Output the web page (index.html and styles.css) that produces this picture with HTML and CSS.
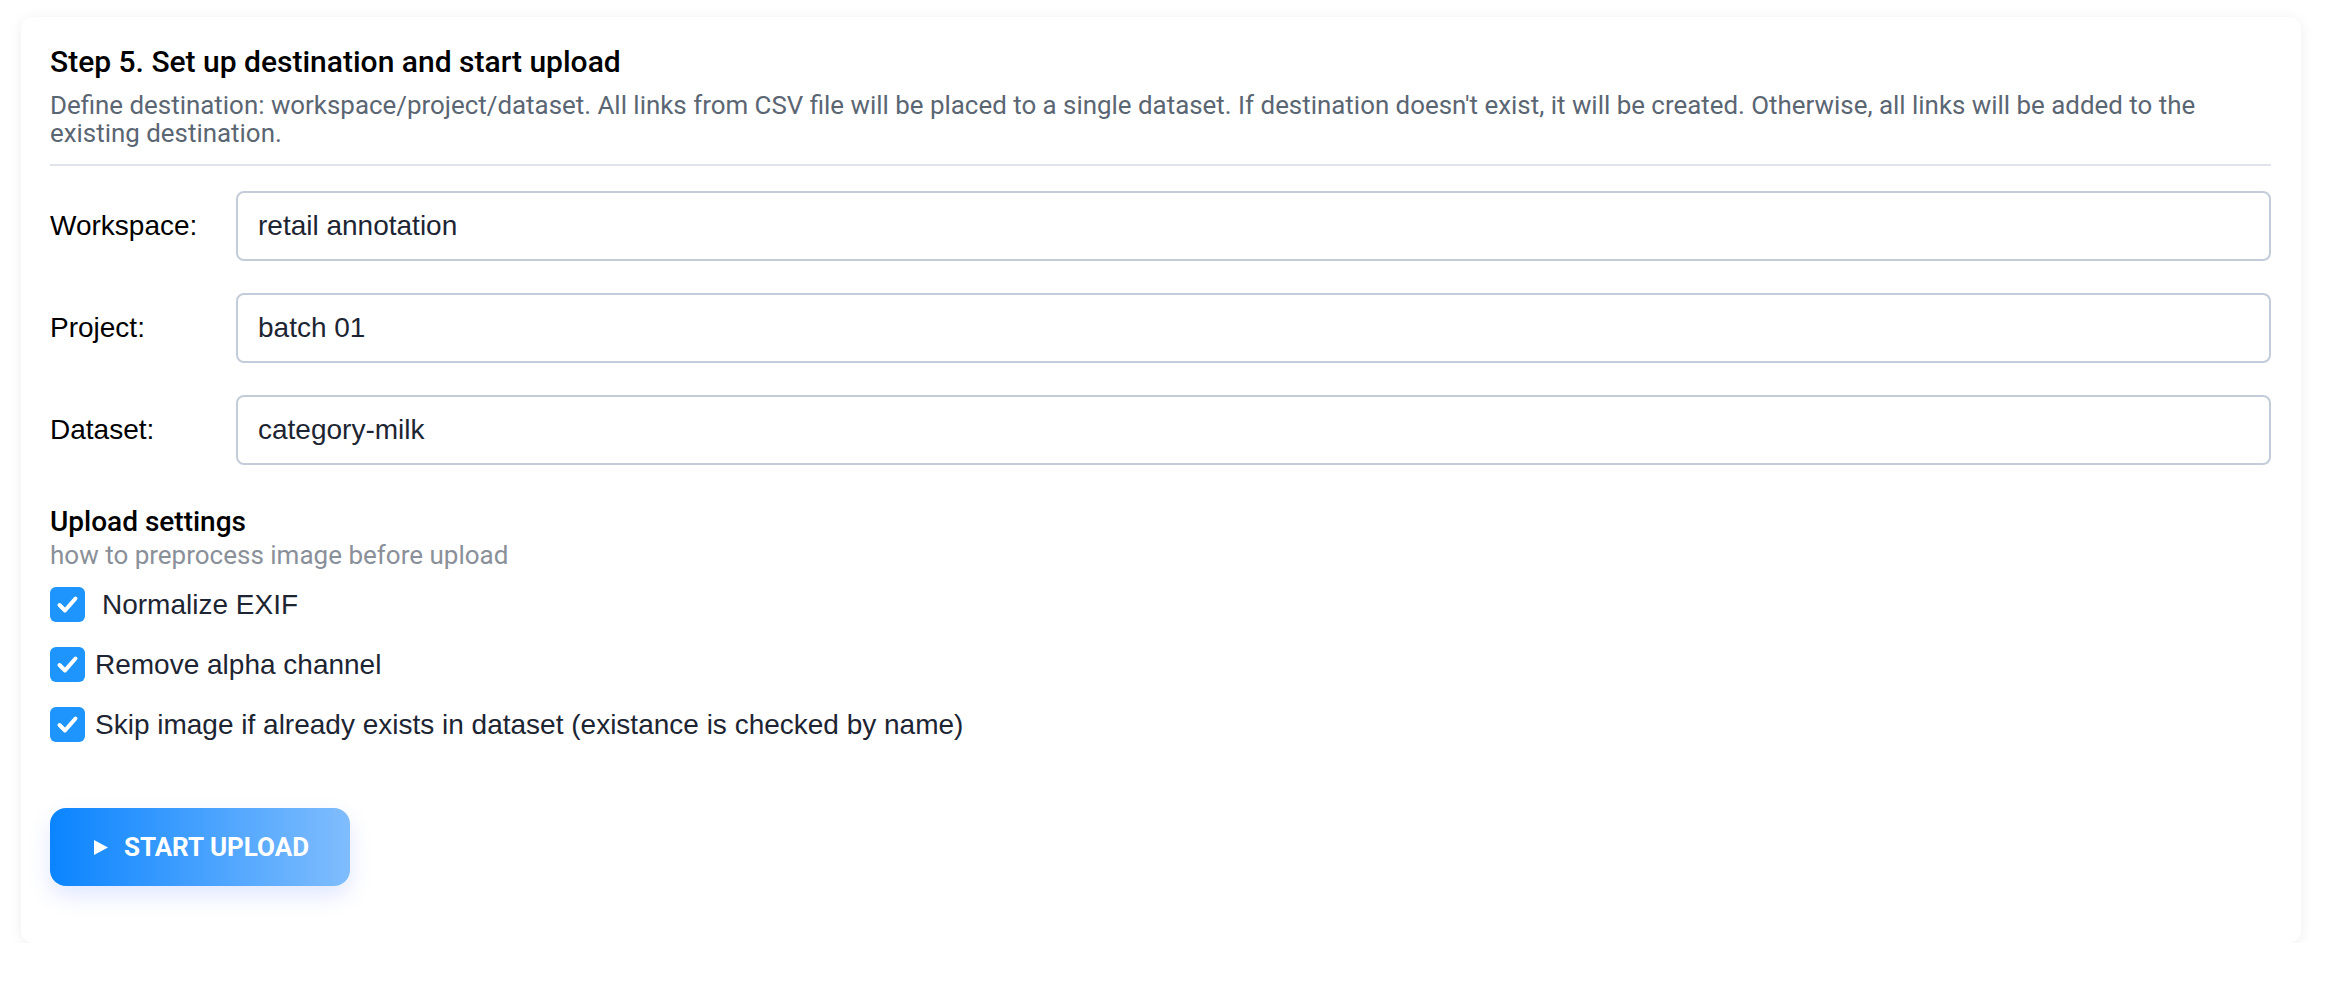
FILE: index.html
```html
<!DOCTYPE html>
<html lang="en">
<head>
<meta charset="utf-8">
<title>Step 5</title>
<link rel="stylesheet" href="styles.css">
</head>
<body>
<div class="card">
  <div class="header">
    <h2 class="title">Step 5. Set up destination and start upload</h2>
    <p class="desc">Define destination: workspace/project/dataset. All links from CSV file will be placed to a single dataset. If destination doesn't exist, it will be created. Otherwise, all links will be added to the existing destination.</p>
  </div>
  <div class="fields">
    <div class="field">
      <label class="field-label">Workspace:</label>
      <div class="input">retail annotation</div>
    </div>
    <div class="field">
      <label class="field-label">Project:</label>
      <div class="input">batch 01</div>
    </div>
    <div class="field">
      <label class="field-label">Dataset:</label>
      <div class="input">category-milk</div>
    </div>
  </div>
  <div class="settings">
    <div class="settings-title">Upload settings</div>
    <div class="settings-sub">how to preprocess image before upload</div>
    <div class="checks">
      <div class="check">
        <span class="box"><svg viewBox="0 0 35 35" width="35" height="35"><path d="M9.5 18l5.5 5.5L25.5 11.5" fill="none" stroke="#fff" stroke-width="4" stroke-linecap="round" stroke-linejoin="round"/></svg></span>
        <span class="check-label spaced">Normalize EXIF</span>
      </div>
      <div class="check">
        <span class="box"><svg viewBox="0 0 35 35" width="35" height="35"><path d="M9.5 18l5.5 5.5L25.5 11.5" fill="none" stroke="#fff" stroke-width="4" stroke-linecap="round" stroke-linejoin="round"/></svg></span>
        <span class="check-label">Remove alpha channel</span>
      </div>
      <div class="check">
        <span class="box"><svg viewBox="0 0 35 35" width="35" height="35"><path d="M9.5 18l5.5 5.5L25.5 11.5" fill="none" stroke="#fff" stroke-width="4" stroke-linecap="round" stroke-linejoin="round"/></svg></span>
        <span class="check-label">Skip image if already exists in dataset (existance is checked by name)</span>
      </div>
    </div>
  </div>
  <button class="start-btn" type="button">
    <svg class="play" viewBox="0 0 14 15" width="14" height="15"><path d="M0 0L14 7.5L0 15Z" fill="#fff"/></svg>
    <span>START UPLOAD</span>
  </button>
</div>
</body>
</html>
```

FILE: styles.css
```css
* { box-sizing: border-box; }
html, body { margin: 0; padding: 0; background: #ffffff; }
body { font-family: Roboto, "Liberation Sans", sans-serif; }

.card {
  margin: 17px 29px 0 21px;
  height: 926px;
  background: #fff;
  border-radius: 12px;
  box-shadow: 0 2px 14px rgba(0, 0, 0, 0.07);
  padding: 29px 30px 0 29px;
}

.header {
  border-bottom: 2px solid #dfe4ea;
  padding-bottom: 17px;
}
.title {
  margin: 0;
  font-size: 30px;
  line-height: 32px;
  font-weight: 500;
  color: #000;
}
.desc {
  margin: 13px 0 0;
  font-size: 25.9px;
  line-height: 28px;
  color: #5b6673;
}

.fields {
  display: flex;
  flex-direction: column;
  gap: 32px;
  padding-top: 25px;
}
.field {
  display: flex;
  align-items: center;
}
.field-label {
  width: 186px;
  flex: none;
  font-family: "Liberation Sans", Arial, sans-serif;
  font-size: 28px;
  color: #000;
}
.input {
  flex: 1;
  height: 70px;
  border: 2px solid #c3cdda;
  border-radius: 8px;
  padding: 0 20px;
  display: flex;
  align-items: center;
  font-family: "Liberation Sans", Arial, sans-serif;
  font-size: 28px;
  color: #1d2533;
}

.settings { padding-top: 41px; }
.settings-title {
  font-size: 28px;
  line-height: 32px;
  font-weight: 500;
  color: #000;
}
.settings-sub {
  font-size: 26px;
  line-height: 30px;
  color: #8a9099;
  margin-top: 2px;
}
.checks {
  display: flex;
  flex-direction: column;
  gap: 25px;
  margin-top: 17px;
}
.check {
  display: flex;
  align-items: center;
  height: 35px;
}
.box {
  width: 35px;
  height: 35px;
  border-radius: 6px;
  background: #1e95fc;
  display: flex;
  align-items: center;
  justify-content: center;
  flex: none;
}
.check-label {
  margin-left: 10px;
  font-family: "Liberation Sans", Arial, sans-serif;
  font-size: 28px;
  color: #1d2533;
}
.check-label.spaced { margin-left: 17px; }

.start-btn {
  margin-top: 66px;
  width: 300px;
  height: 78px;
  border: none;
  border-radius: 16px;
  background: linear-gradient(90deg, #0a84ff 0%, #80bdfd 100%);
  box-shadow: 0 10px 22px rgba(70, 110, 255, 0.16);
  color: #fff;
  font-family: Roboto, sans-serif;
  font-weight: 700;
  font-size: 26px;
  display: flex;
  align-items: center;
  justify-content: center;
  gap: 16px;
  padding: 0 0 0 3px;
}
.play { flex: none; }
```
